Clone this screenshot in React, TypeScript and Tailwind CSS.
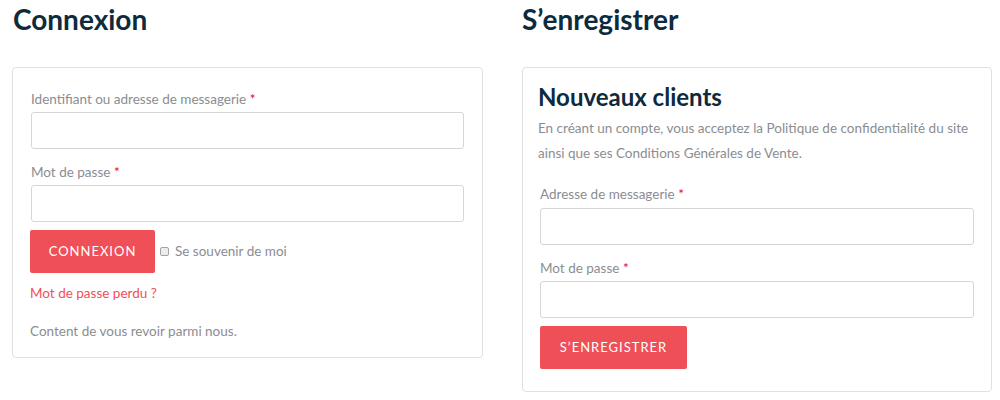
import React from "react";

const Label: React.FC<{ text: string }> = ({ text }) => (
  <label className="block text-[13.5px] leading-[20px] text-[#8b8d91]">
    {text} <span className="text-[#e4002b]">*</span>
  </label>
);

const Field: React.FC<{ text: string; type?: string; gap?: string }> = ({ text, type = "text", gap = "mt-[3px]" }) => (
  <div>
    <Label text={text} />
    <input
      type={type}
      className={`${gap} block h-[37px] w-full rounded-[3px] border border-[#d6d6d6] bg-white px-3 outline-none`}
    />
  </div>
);

export default function App() {
  return (
    <div className="flex h-[400px] w-[1000px] bg-white pl-[12px] font-['Lato',sans-serif]">
      {/* Connexion */}
      <div className="w-[471px] shrink-0">
        <h2 className="mt-[1px] pl-[1px] text-[28px] font-bold leading-[36px] text-[#0e2a3d]">Connexion</h2>
        <div className="mt-[30px] rounded-[4px] border border-[#e1e1e1] px-[17px] pb-[16px] pt-[21px]">
          <div className="px-[1px]">
            <Field text="Identifiant ou adresse de messagerie" />
            <div className="mt-[13px]">
              <Field text="Mot de passe" type="password" />
            </div>
          </div>
          <div className="mt-[8px] flex items-center">
            <button className="h-[43px] w-[125px] rounded-[2px] bg-[#ef4f56] text-[13px] tracking-[1px] text-white">
              CONNEXION
            </button>
            <span className="ml-[5px] inline-block h-[9px] w-[9px] rounded-[2px] border border-[#a3a3a3] bg-[#ececec]" />
            <span className="ml-[6px] text-[13.5px] text-[#8b8d91]">Se souvenir de moi</span>
          </div>
          <a className="mt-[10px] block text-[13.5px] leading-[20px] text-[#ef4f56]">Mot de passe perdu ?</a>
          <p className="mt-[18px] text-[13.5px] leading-[20px] text-[#8b8d91]">Content de vous revoir parmi nous.</p>
        </div>
      </div>

      {/* S'enregistrer */}
      <div className="ml-[39px] w-[470px] shrink-0">
        <h2 className="mt-[1px] text-[28px] font-bold leading-[36px] text-[#0e2a3d]">S’enregistrer</h2>
        <div className="mt-[30px] rounded-[4px] border border-[#e1e1e1] px-[15px] pb-[22px] pt-[14px]">
          <h3 className="text-[24px] font-bold leading-[30px] text-[#0e2a3d]">Nouveaux clients</h3>
          <p className="mt-[4px] text-[13.5px] leading-[25px] text-[#8b8d91]">
            En créant un compte, vous acceptez la Politique de confidentialité du site ainsi que ses Conditions
            Générales de Vente.
          </p>
          <div className="mt-[18px] px-[2px]">
            <Field text="Adresse de messagerie" gap="mt-[4px]" />
            <div className="mt-[13px]">
              <Field text="Mot de passe" type="password" />
            </div>
            <button className="mt-[8px] h-[43px] w-[147px] rounded-[2px] bg-[#ef4f56] text-[13px] tracking-[1px] text-white">
              S’ENREGISTRER
            </button>
          </div>
        </div>
      </div>
    </div>
  );
}
